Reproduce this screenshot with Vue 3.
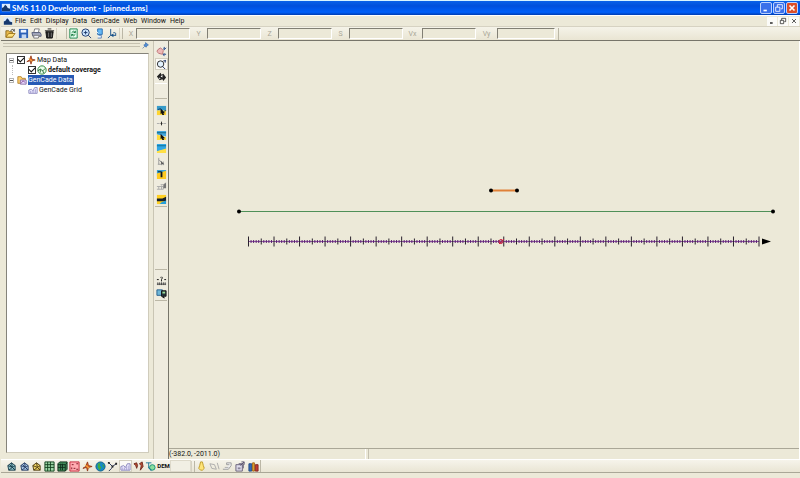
<script setup>
import { h } from 'vue'

const arrow = ['M5 4L10 9L8 9L9 11L7 11L6 9L5 10Z', '#111', '']
// Each icon is a list of [path, fill, stroke] on a 12 x 12 grid.
const icons = {
  app: [['M1 1H11V10H1Z', '#dcecff', ''], ['M1 6L3 5L5 2L7 4L8 6L11 7V10H1Z', '#16386c', '']],
  open: [['M1 3H4L5 4H8V10H1Z', '#e8b84a', '#8a6a20'], ['M1 10L4 6H11L8 10Z', '#ffe17a', '#a0761c'], ['M6 3Q8 0 10 3M10 1V4', '', '#333']],
  save: [['M1 1H11V11H1Z', '#2d62b8', ''], ['M3 2H9V5H3Z', '#eef4ff', ''], ['M4 7H9V11H4Z', '#c5d8f2', '']],
  print: [['M4 1H9L8 5H3Z', '#fff', '#777'], ['M1 5H10L11 7V9H2Z', '#a7abc0', '#555c78'], ['M3 8H9L8 11H3Z', '#f4f4fa', '#777']],
  trash: [['M2 4H10L9 11H3Z', '#222', '#111'], ['M1 3H11M4 1H8', '', '#222'], ['M5 5V10M8 5V10', '', '#777']],
  refresh: [['M2 1H10V11H2Z', '#e8fff0', '#15834a'], ['M4 5Q6 2 8 5M8 3V5H6M8 7Q6 10 4 7M4 9V7H6', '', '#087434']],
  frame: [['M5 1A4 4 0 1 0 5 9A4 4 0 1 0 5 1M8 8L11 11', '#cde6ff', '#193568'], ['M3 5H7M5 3V7', '', '#193568']],
  display: [['M4 1H9V7H4Z', '#65b9f6', '#236bb1'], ['M5 8H8V11H4', '#eaf4ff', '#5d83b3'], ['M2 3L5 6', '', '#fff']],
  axes: [['M4 1V8L10 8M4 8L1 11M7 5Q11 5 9 8', '', '#17518a'], ['M4 8L7 6V10Z', '#17518a', '']],
  pan: [['M2 4L5 2L8 5L7 9L3 8L1 6Z', '#edb8b8', '#bc7274'], ['M9 1V4M8 3L9 4L11 2M8 9H11M9 8L8 9L9 11', '', '#183d87']],
  zoom: [['M5 2A3 3 0 1 0 5 9A3 3 0 1 0 5 2', '#e3f2ff', '#222'], ['M7 8L10 11M8 2H11M10 1V4', '', '#1b3267']],
  rotate: [['M1 6L5 2L6 4L8 3L11 7L8 11L7 9L4 10Z', '#222', ''], ['M5 6L7 4V7ZM3 7L5 8L4 9Z', '#fff', '']],
  m1: [['M1 1H11V6H1Z', '#379bc9', ''], ['M1 6H11V11H1Z', '#ffd531', ''], ['M2 5L5 4L8 7L11 6', '', '#153b65'], arrow],
  m2: [['M1 6H4M8 6H11', '', '#aaa'], ['M5 6H7M6 4V8', '', '#222']],
  m3: [['M1 1H11V7L1 5Z', '#45a8df', ''], ['M1 5L11 8V11H1Z', '#ffdb3d', ''], ['M1 3H11', '', '#0b607f'], arrow],
  m4: [['M1 1H11V7L1 9Z', '#32a7e5', ''], ['M1 9L11 6V11H1Z', '#ffdf44', ''], ['M1 3H11', '', '#0c6d94']],
  m5: [['M3 2V9M3 4L6 7V10M2 9H6M8 6V10', '', '#999'], ['M5 5L9 9H6Z', '#555', '']],
  m6: [['M1 1H11V5L1 8Z', '#3aa3d8', ''], ['M1 5L11 2V11H1Z', '#ffca20', ''], ['M5 3H7V9H5Z', '#101820', ''], ['M2 3H6', '', '#101820']],
  m7: [['M1 6H8V9H1M5 4H8L11 2M3 6V9M6 5V9', '', '#aaa'], ['M8 4L11 2V8H8Z', '#777', '']],
  m8: [['M1 1H11V11H1Z', '#ffd023', ''], ['M1 5L7 5L11 3V8H1Z', '#172029', ''], ['M6 9L11 7V11H4Z', '#269fdb', '']],
  measure: [['M1 10H11M2 8V11M4 8V11M6 8V11M8 8V11M10 8V11', '', '#444'], ['M1 5H3M9 5H11M5 3Q6 1 7 3L6 5V7', '', '#111']],
  info: [['M1 2H7V8H1Z', '#6fb7d8', '#245e8c'], ['M6 3H11V9H8L9 11L6 9Z', '#26343b', '#111'], ['M7 4H10V6H7Z', '#9adf9a', '']],
  meshA: [['M2 5L6 2L10 5V10H3Z', '#8fc4c9', '#193b4a'], ['M2 5L7 7L6 2M7 7L10 5M7 7L3 10M7 7L10 10M4 4L9 9', '', '#193b4a']],
  meshB: [['M2 5L6 2L10 5V10H3Z', '#a9c6e6', '#283d62'], ['M2 5L7 7L6 2M7 7L10 5M7 7L3 10M7 7L10 10M4 4L9 9', '', '#283d62']],
  meshC: [['M2 5L6 2L10 5V10H3Z', '#f0d565', '#4c3a12'], ['M2 5L7 7L6 2M7 7L10 5M7 7L3 10M7 7L10 10', '', '#4c3a12']],
  gridA: [['M1 1H11V11H1Z', '#9ed8a8', '#123f1d'], ['M4 1V11M7 1V11M1 4H11M1 7H11', '', '#123f1d']],
  gridB: [['M1 3L3 1H11V9L9 11H1Z', '#438c5a', '#0d2d18'], ['M1 4H9V11M4 3V10M6 3V10M1 7H9M9 4L11 2', '', '#102e1c']],
  scatter: [['M1 1H11V11H1Z', '#ffabb1', '#c4273b'], ['M3 4H5M8 3H10M5 8H7M8 9H10M3 9V7', '', '#7b1020']],
  map: [['M6 1L7 5L11 6L7 7L6 11L5 7L1 8L4 6Z', '#ee6a22', '#923c1c'], ['M3 4L8 8', '', '#ffc245']],
  globe: [['M6 1A5 5 0 1 0 6 11A5 5 0 1 0 6 1', '#1689c9', '#145f86'], ['M3 3L6 2L5 5L7 7L5 10L3 7Z', '#42ad40', ''], ['M8 3L10 5L9 8Z', '#38a647', '']],
  river: [['M2 2L6 6L10 3M6 6L5 8L2 11', '', '#1c2b54'], ['M1 1H3V3H1ZM9 2H11V4H9ZM5 5H7V7H5Z', '#222', '']],
  gencade: [['M1 10V6L4 5L6 7L8 3H11V10Z', '#eceaff', '#8682b9'], ['M3 10V7M5 10V7M7 10V6M9 10V5', '', '#aaa3d2']],
  particles: [['M1 3L4 2L5 5L4 8L3 5ZM7 3L10 1L11 6L8 10L9 5Z', '#b64931', '#712b20']],
  annotate: [['M1 2H7M4 2V8', '', '#1a7595'], ['M8 4A3 3 0 1 0 8 10A3 3 0 1 0 8 4', '#8bdd9d', '#118f76'], ['M4 7L7 11', '', '#116f94']],
  bulb: [['M5 1H7L8 5L9 8L7 10H5L3 8L4 5Z', '#ffe578', '#bd9a26']],
  wave: [['M1 3L6 4L8 9L3 8ZM9 2L11 9', '', '#aaa']],
  sheet: [['M1 9H7L10 5V2H5V4H8', '#eee', '#999'], ['M3 7H7', '', '#aaa']],
  export: [['M1 4H8V11H1Z', '#dedbea', '#665e76'], ['M3 7H6V9H3Z', '#8a8498', ''], ['M4 3H9V8M6 5L10 1M7 1H10V4', '', '#57506c']],
  books: [['M1 3H4V11H1Z', '#3267ba', '#234b82'], ['M5 2H7V11H5Z', '#e5aa32', '#a26617'], ['M8 4H11V11H8Z', '#c33a31', '#812822']],
  coverage: [['M6 1A5 5 0 1 0 6 11A5 5 0 1 0 6 1', '#eaffea', '#187a2b'], ['M1 7L4 5L7 7L10 4M4 5V9M7 7L8 10', '', '#155b25']],
  folder: [['M1 2H5L6 4H10V10H1Z', '#ffd16c', '#b07e27'], ['M4 6H11V11H4Z', '#e9dcff', '#80649c'], ['M5 10L7 7L10 9', '', '#8c4d9c']],
  pin: [['M6 1L11 5L9 6L7 9L3 5L6 4Z', '#4f8ed4', '#2b61a9'], ['M5 7L1 11', '', '#2b61a9']],
  min: [['M3 8H7V10H3Z', 'currentColor', '']],
  restore: [['M4 5V2H10V7H8M2 5H7V10H2Z', '', 'currentColor']],
  close: [['M3 3L9 9M9 3L3 9', '', 'currentColor']],
}
const Icon = (p) => h('svg', { viewBox: '0 0 12 12', class: 'icon', 'aria-hidden': 'true' },
  icons[p.name].map(([d, fill, stroke]) => h('path', { d, fill: fill || 'none', stroke: stroke || 'none' })))
Icon.props = ['name']

const menus = ['File', 'Edit', 'Display', 'Data', 'GenCade', 'Web', 'Window', 'Help']
const fileTools = ['open', 'save', 'print', 'trash']
const viewTools = ['refresh', 'frame', 'display', 'axes']
const fields = ['X', 'Y', 'Z', 'S', 'Vx', 'Vy']
const staticTools = ['pan', 'zoom', 'rotate']
const gridTools = ['m1', 'm2', 'm3', 'm4', 'm5', 'm6', 'm7', 'm8']
const modules = ['meshA', 'meshB', 'meshC', 'gridA', 'gridB', 'scatter', 'map', 'globe', 'river', 'gencade', 'particles', 'annotate']
const extras = ['bulb', 'wave', 'sheet', 'export', 'books']

// Shoreline grid: 200 cells with a longer mark every 5 and 10 cells.
const start = 79.5
const end = 590
const ticks = Array.from({ length: 201 }, (_, i) => ({
  x: start + (i * (end - start)) / 200,
  size: i % 10 === 0 ? 5 : i % 5 === 0 ? 3 : 1.5,
}))
const marks = (big) => ticks.filter((t) => (t.size > 2) === big)
  .map((t) => `M${t.x} ${200.5 - t.size}V${200.5 + t.size}`).join('')
</script>

<template>
  <div class="window">
    <header class="title">
      <Icon name="app" />
      <h1>SMS 11.0 Development - [pinned.sms]</h1>
      <div class="controls">
        <button aria-label="Minimize"><Icon name="min" /></button>
        <button aria-label="Restore"><Icon name="restore" /></button>
        <button class="quit" aria-label="Close"><Icon name="close" /></button>
      </div>
    </header>

    <nav class="menu">
      <Icon name="app" />
      <button v-for="m in menus" :key="m">{{ m }}</button>
      <div class="doc-controls">
        <button aria-label="Minimize document"><Icon name="min" /></button>
        <button aria-label="Restore document"><Icon name="restore" /></button>
        <button aria-label="Close document"><Icon name="close" /></button>
      </div>
    </nav>

    <div class="toolbar">
      <div class="group">
        <button v-for="t in fileTools" :key="t" :aria-label="t"><Icon :name="t" /></button>
      </div>
      <i class="grip wide"></i>
      <div class="group">
        <button v-for="t in viewTools" :key="t" :aria-label="t"><Icon :name="t" /></button>
      </div>
      <i class="grip"></i>
      <div class="fields">
        <template v-for="f in fields" :key="f">
          <label :for="'f' + f">{{ f }}</label><input :id="'f' + f" type="text" disabled />
        </template>
      </div>
    </div>

    <main>
      <aside>
        <div class="dock"><span></span><button aria-label="Pin panel"><Icon name="pin" /></button></div>
        <div class="tree">
          <ul>
            <li>
              <div class="row"><i class="toggle"></i><input type="checkbox" checked id="map" /><Icon name="map" /><label for="map">Map Data</label></div>
              <ul>
                <li class="row"><input type="checkbox" checked id="cov" /><Icon name="coverage" /><label for="cov" class="bold">default coverage</label></li>
              </ul>
            </li>
            <li>
              <div class="row"><i class="toggle"></i><Icon name="folder" /><span class="selected">GenCade Data</span></div>
              <ul>
                <li class="row"><Icon name="gencade" /><span class="leaf">GenCade Grid</span></li>
              </ul>
            </li>
          </ul>
        </div>
      </aside>

      <div class="strip">
        <div class="stack three"><button v-for="t in staticTools" :key="t" :class="{ on: t === 'zoom' }" :aria-label="t"><Icon :name="t" /></button></div>
        <div class="blank"></div>
        <div class="stack eight"><button v-for="t in gridTools" :key="t" :aria-label="t"><Icon :name="t" /></button></div>
        <div class="blank tall"></div>
        <div class="stack two">
          <button aria-label="Measure"><Icon name="measure" /></button>
          <button aria-label="Info"><Icon name="info" /></button>
        </div>
        <div class="rule"></div>
      </div>

      <section class="view">
        <svg class="scene" viewBox="0 0 630 407" preserveAspectRatio="xMinYMin meet">
          <path d="M322 149.5H348" stroke="#e08038" stroke-width="2" />
          <circle cx="322" cy="149.5" r="2" /><circle cx="348" cy="149.5" r="2" />
          <path d="M70 170.5H604" stroke="#4f9058" />
          <circle cx="70" cy="170.5" r="2" /><circle cx="604" cy="170.5" r="2" />
          <path :d="`M${start} 200.5H${end}`" stroke="#8f50a4" />
          <path :d="marks(false)" stroke="#5a2470" />
          <path :d="marks(true)" stroke="#28202c" />
          <circle cx="332" cy="200.5" r="2" fill="none" stroke="#c8203c" /><path d="M330 203L335 198" stroke="#c8203c" />
          <path d="M593 197.5L602 200.5L593 203.5Z" />
        </svg>
        <div class="status"><span>(-382.0, -2011.0)</span><span></span></div>
      </section>
    </main>

    <footer>
      <div class="group modules">
        <button v-for="t in modules" :key="t" :class="{ on: t === 'gencade' }" :aria-label="t"><Icon :name="t" /></button>
        <button class="dem">DEM</button>
      </div>
      <div class="slot"></div>
      <i class="grip"></i>
      <div class="group extras"><button v-for="t in extras" :key="t" :aria-label="t"><Icon :name="t" /></button></div>
      <i class="end"></i>
    </footer>
    <div class="base"></div>
  </div>
</template>

<style>
body { background: #ece9d8; }
</style>

<style scoped>
* { box-sizing: border-box; }
.window { display: flex; flex-direction: column; height: 100vh; overflow: hidden; padding-left: 1px; background: #ece9d8; color: #111; font: 7px/10px Roboto, "Liberation Sans", sans-serif; border-top: 1px solid #d8f4ff; }
button { padding: 0; border: 0; background: none; color: inherit; font: inherit; display: flex; align-items: center; justify-content: center; }
.icon { width: 11px; height: 11px; flex: none; display: block; }
.title { display: flex; align-items: center; flex: none; height: 14px; gap: 1px; margin-left: -1px; padding: 0 2px 0 1px; color: #fff; background: linear-gradient(#0a62e8, #0050dc 35%, #0060fa 80%, #003cb0); }
.title h1 { flex: 1; margin: 0; font: bold 8px/12px Lato, "Liberation Sans", sans-serif; white-space: nowrap; }
.title .icon { width: 10px; height: 10px; }
.controls { display: flex; gap: 1px; }
.controls button { width: 12px; height: 12px; border: 1px solid #b9d0ff; border-radius: 2px; background: #3a70ea; }
.controls .quit { background: #dc4e28; }
.controls .quit .icon { stroke-width: 2; }
.menu { display: flex; align-items: center; flex: none; height: 12px; gap: 4px; padding: 0 1px 0 2px; border-top: 1px solid #fff; border-bottom: 1px solid #d6d2c2; }
.menu > .icon { width: 10px; margin-right: -2px; }
.doc-controls { display: flex; gap: 1px; margin-left: auto; }
.doc-controls button { width: 10px; height: 9px; background: #fbfbf8; }
.doc-controls .icon { width: 8px; height: 8px; }
.toolbar { display: flex; align-items: center; flex: none; height: 14px; padding-left: 3px; background: linear-gradient(#f5f3e9, #e9e5d3); border-bottom: 1px solid #77756a; }
.group { display: flex; align-items: center; }
.group button { width: 13px; height: 12px; }
.grip { width: 4px; height: 11px; border-right: 1px solid #bbb7a6; border-left: 1px solid #d5d1c1; }
.grip.wide { width: 11px; }
.fields { display: grid; grid-template-columns: 10px 54px 17px 54px 17px 54px 17px 54px 19px 54px 21px 58px; height: 12px; padding: 0 3px; border-right: 1px solid #bbb7a6; }
.fields label { color: #aaa797; text-align: center; line-height: 12px; }
.fields input { min-width: 0; width: 100%; height: 11px; border: 1px solid #fff; border-top-color: #817f74; border-left: 1px solid #817f74; background: #ece9d8; }
main { display: flex; flex: 1; min-height: 0; }
aside { display: flex; flex-direction: column; width: 152px; padding: 0 4px 6px 2px; }
.dock { display: flex; align-items: center; gap: 2px; height: 12px; flex: none; padding-bottom: 4px; }
.dock span { flex: 1; height: 4px; border-top: 1px solid #c5c1b0; border-bottom: 1px solid #c5c1b0; }
.dock .icon { width: 7px; height: 7px; }
.tree { flex: 1; margin-left: 3px; background: #fff; border: 1px solid #d0ccbc; border-top-color: #85837a; border-left-color: #85837a; }
ul { list-style: none; margin: 0; padding: 0; }
.tree > ul { padding: 1px 1px 0; }
.tree ul ul { margin-left: 4px; padding-left: 15px; border-left: 1px dotted #bbb; }
.tree li:last-child > ul { border-left-color: transparent; }
.row { display: flex; align-items: center; height: 10px; gap: 1px; white-space: nowrap; }
.row .icon { width: 10px; height: 10px; }
.row input { appearance: none; width: 8px; height: 8px; margin: 0; border: 1px solid #333; background: #fff; display: grid; place-items: center; }
.row input::after { content: ""; width: 5px; height: 3px; margin-top: -2px; border: solid #111; border-width: 0 0 1px 1px; transform: rotate(-45deg); }
.toggle { width: 5px; height: 5px; margin: 0 2px 0 1px; border: 1px solid #b5b5b5; background: linear-gradient(#555, #555) center / 3px 1px no-repeat; }
.bold { font-weight: bold; }
.selected { padding-right: 1px; background: #2659b5; color: #fff; }
.strip { width: 16px; padding: 4px 1px 0; border-left: 1px solid #c9c5b4; border-right: 1px solid #77756a; background: #efecdf; }
.stack { display: flex; flex-direction: column; }
.stack button { flex: 1; min-height: 0; width: 13px; }
.three { height: 38px; }
.eight { height: 102px; }
.two { height: 26px; }
.blank { height: 16px; margin-bottom: 5px; border-top: 1px solid #fff; border-bottom: 1px solid #bbb7a6; }
.blank.tall { height: 64px; margin-bottom: 4px; border-top-color: #bbb7a6; }
.rule { border-top: 1px solid #bbb7a6; }
.on { background: #fbfaf6; outline: 1px solid #d2cebe; outline-offset: -1px; }
.view { flex: 1; min-width: 0; display: flex; flex-direction: column; border-right: 1px solid #fff; }
.scene { display: block; flex: 1; min-height: 0; width: 100%; }
.status { display: flex; flex: none; height: 11px; gap: 2px; border-top: 1px solid #aaa797; }
.status span { flex: 1; border-left: 1px solid #c5c1b0; }
.status span:first-child { flex: 0 0 197px; border-left: 0; border-right: 1px solid #fff; }
footer { display: flex; align-items: center; flex: none; height: 14px; padding-left: 4px; border-top: 1px solid #fff; background: linear-gradient(#f6f4eb, #e9e5d4); border-bottom: 1px solid #aaa797; }
.modules { width: 165px; }
.modules button { flex: 1; min-width: 0; }
.modules .dem { font-size: 6px; font-weight: bold; }
.slot { width: 21px; height: 12px; border: 1px solid #ddd9ca; background: #f1efe4; }
.end { height: 12px; border-left: 1px solid #bbb7a6; }
.base { flex: none; height: 5px; }
</style>
